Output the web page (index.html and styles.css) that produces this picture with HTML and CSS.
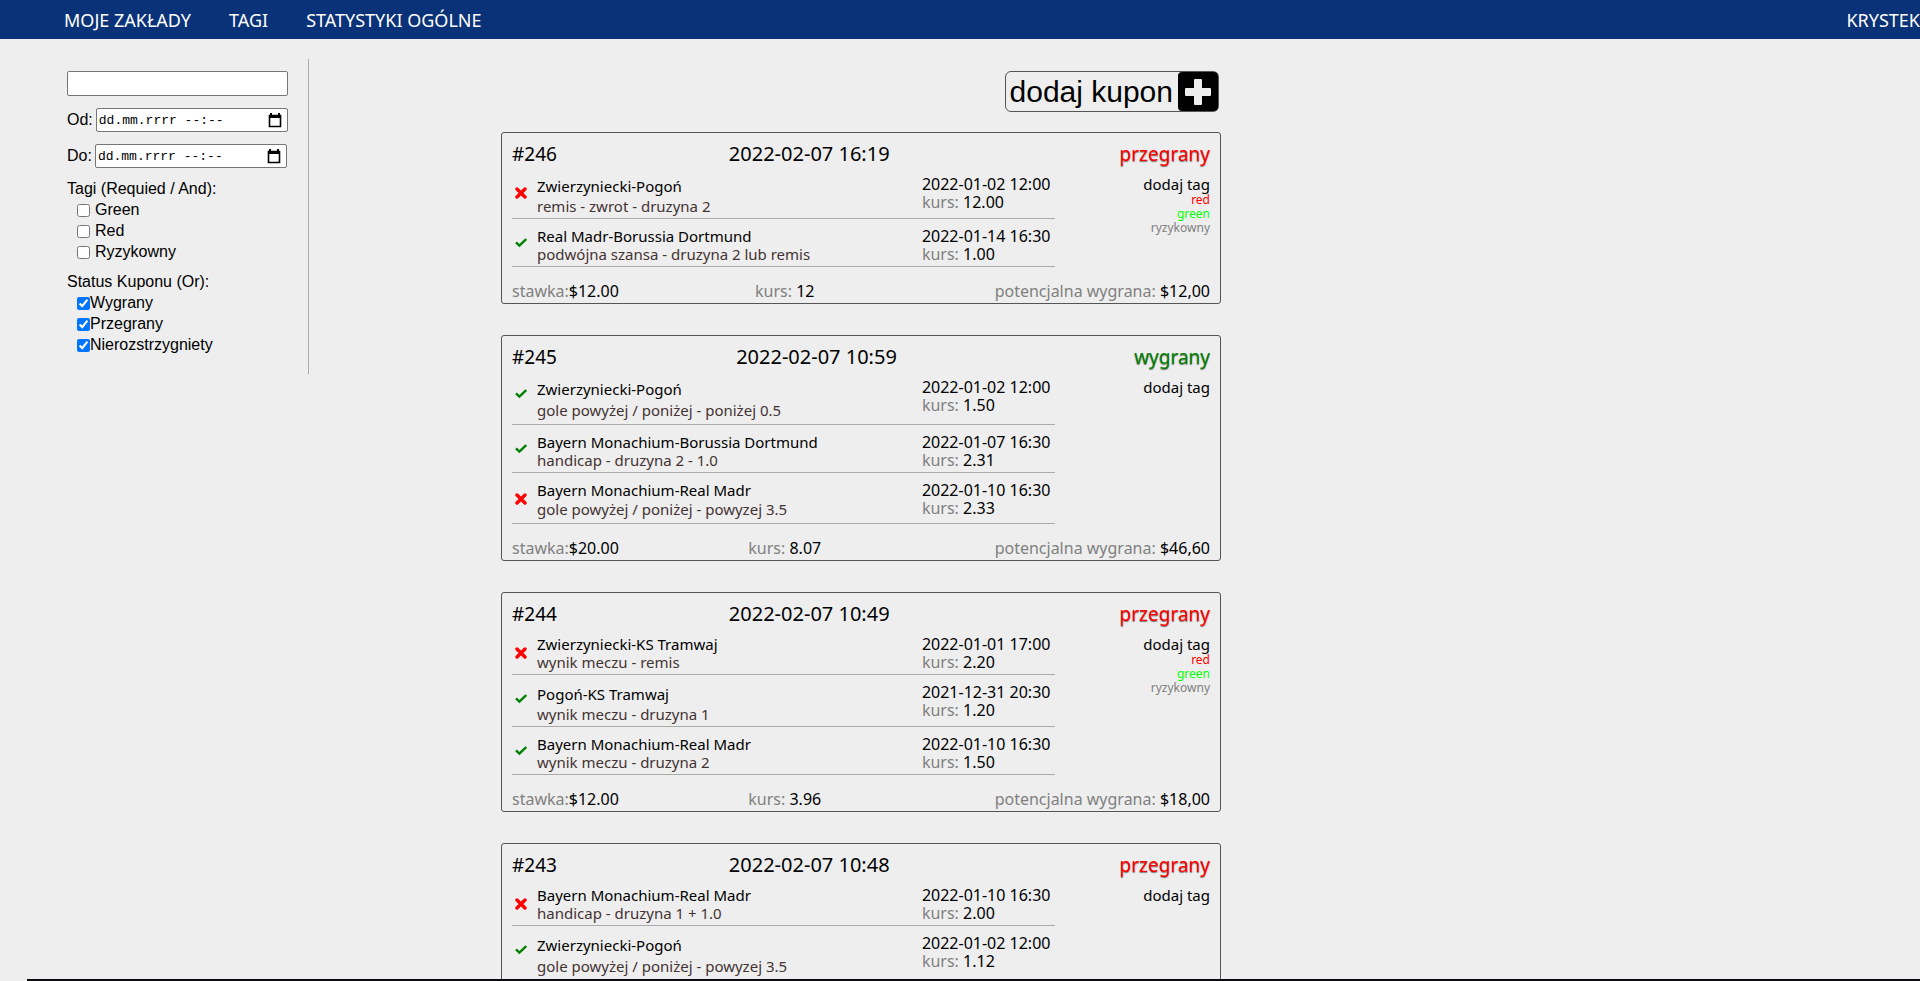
FILE: index.html
```html
<!DOCTYPE html>
<html lang="pl">
<head>
<meta charset="utf-8">
<title>Moje zakłady</title>
<link rel="stylesheet" href="styles.css">
</head>
<body>
<svg class="sprite" aria-hidden="true">
  <symbol id="check" viewBox="0 0 12 12"><path d="M1 6.4 4.4 9.6 11.2 3" fill="none" stroke="green" stroke-width="2.4"/></symbol>
  <symbol id="cross" viewBox="0 0 12 12"><path d="M2 2 10 10M10 2 2 10" fill="none" stroke="red" stroke-width="3.4" stroke-linecap="round"/></symbol>
</svg>
<nav class="nav">
  <div class="nav-links">
    <a href="#">MOJE ZAKŁADY</a>
    <a href="#">TAGI</a>
    <a href="#">STATYSTYKI OGÓLNE</a>
  </div>
  <a href="#">KRYSTEK</a>
</nav>
<div class="page">
  <form class="filters">
    <input class="search" type="text" aria-label="Szukaj">
    <div class="date-row">
      <label for="od">Od:</label>
      <div class="date-box">
        <input id="od" type="text" placeholder="dd.mm.rrrr --:--">
        <button type="button" aria-label="Wybierz datę od"><svg viewBox="0 0 14 15"><path d="M1.5 2.5h11v11h-11z" fill="none" stroke="#000" stroke-width="1.6"/><path d="M1 2h12v3H1zM2 0h2v3H2zM10 0h2v3h-2z"/></svg></button>
      </div>
    </div>
    <div class="date-row">
      <label for="do">Do:</label>
      <div class="date-box">
        <input id="do" type="text" placeholder="dd.mm.rrrr --:--">
        <button type="button" aria-label="Wybierz datę do"><svg viewBox="0 0 14 15"><path d="M1.5 2.5h11v11h-11z" fill="none" stroke="#000" stroke-width="1.6"/><path d="M1 2h12v3H1zM2 0h2v3H2zM10 0h2v3h-2z"/></svg></button>
      </div>
    </div>
    <fieldset class="group spaced">
      <legend>Tagi (Requied / And):</legend>
      <label><input type="checkbox">Green</label>
      <label><input type="checkbox">Red</label>
      <label><input type="checkbox">Ryzykowny</label>
    </fieldset>
    <fieldset class="group">
      <legend>Status Kuponu (Or):</legend>
      <label><input type="checkbox" checked>Wygrany</label>
      <label><input type="checkbox" checked>Przegrany</label>
      <label><input type="checkbox" checked>Nierozstrzygniety</label>
    </fieldset>
  </form>
  <main class="coupons">
    <button class="add" type="button">
      <span class="add-text">dodaj kupon</span>
      <span class="add-icon"><svg viewBox="0 0 26 26"><path d="M10 0h6q1 0 1 1v8h8q1 0 1 1v6q0 1-1 1h-8v8q0 1-1 1h-6q-1 0-1-1v-8H1q-1 0-1-1v-6q0-1 1-1h8V1q0-1 1-1z" fill="#eee"/></svg></span>
    </button>

    <article class="card">
      <header class="card-head"><span>#246</span><time>2022-02-07 16:19</time><strong class="lost">przegrany</strong></header>
      <div class="card-body">
        <div class="bets">
          <div class="bet">
            <svg class="mark miss"><use href="#cross"/></svg>
            <div><p class="team tall">Zwierzyniecki-Pogoń</p><p class="pick">remis - zwrot - druzyna 2</p></div>
            <div class="when"><time>2022-01-02 12:00</time><p><span class="dim">kurs:</span> 12.00</p></div>
          </div>
          <div class="bet">
            <svg class="mark"><use href="#check"/></svg>
            <div><p class="team">Real Madr-Borussia Dortmund</p><p class="pick">podwójna szansa - druzyna 2 lub remis</p></div>
            <div class="when"><time>2022-01-14 16:30</time><p><span class="dim">kurs:</span> 1.00</p></div>
          </div>
        </div>
        <div class="tags"><a href="#">dodaj tag</a><span class="tag red">red</span><span class="tag lime">green</span><span class="tag dim">ryzykowny</span></div>
      </div>
      <footer class="card-foot"><span><span class="dim">stawka:</span>$12.00</span><span class="odds"><span class="dim">kurs:</span> 12</span><span><span class="dim">potencjalna wygrana:</span> $12,00</span></footer>
    </article>

    <article class="card">
      <header class="card-head"><span>#245</span><time>2022-02-07 10:59</time><strong class="won">wygrany</strong></header>
      <div class="card-body">
        <div class="bets">
          <div class="bet">
            <svg class="mark"><use href="#check"/></svg>
            <div><p class="team tall">Zwierzyniecki-Pogoń</p><p class="pick tall">gole powyżej / poniżej - poniżej 0.5</p></div>
            <div class="when"><time>2022-01-02 12:00</time><p><span class="dim">kurs:</span> 1.50</p></div>
          </div>
          <div class="bet">
            <svg class="mark"><use href="#check"/></svg>
            <div><p class="team">Bayern Monachium-Borussia Dortmund</p><p class="pick">handicap - druzyna 2 - 1.0</p></div>
            <div class="when"><time>2022-01-07 16:30</time><p><span class="dim">kurs:</span> 2.31</p></div>
          </div>
          <div class="bet">
            <svg class="mark miss"><use href="#cross"/></svg>
            <div><p class="team">Bayern Monachium-Real Madr</p><p class="pick tall">gole powyżej / poniżej - powyzej 3.5</p></div>
            <div class="when"><time>2022-01-10 16:30</time><p><span class="dim">kurs:</span> 2.33</p></div>
          </div>
        </div>
        <div class="tags"><a href="#">dodaj tag</a></div>
      </div>
      <footer class="card-foot"><span><span class="dim">stawka:</span>$20.00</span><span class="odds"><span class="dim">kurs:</span> 8.07</span><span><span class="dim">potencjalna wygrana:</span> $46,60</span></footer>
    </article>

    <article class="card">
      <header class="card-head"><span>#244</span><time>2022-02-07 10:49</time><strong class="lost">przegrany</strong></header>
      <div class="card-body">
        <div class="bets">
          <div class="bet">
            <svg class="mark miss"><use href="#cross"/></svg>
            <div><p class="team">Zwierzyniecki-KS Tramwaj</p><p class="pick">wynik meczu - remis</p></div>
            <div class="when"><time>2022-01-01 17:00</time><p><span class="dim">kurs:</span> 2.20</p></div>
          </div>
          <div class="bet">
            <svg class="mark"><use href="#check"/></svg>
            <div><p class="team tall">Pogoń-KS Tramwaj</p><p class="pick">wynik meczu - druzyna 1</p></div>
            <div class="when"><time>2021-12-31 20:30</time><p><span class="dim">kurs:</span> 1.20</p></div>
          </div>
          <div class="bet">
            <svg class="mark"><use href="#check"/></svg>
            <div><p class="team">Bayern Monachium-Real Madr</p><p class="pick">wynik meczu - druzyna 2</p></div>
            <div class="when"><time>2022-01-10 16:30</time><p><span class="dim">kurs:</span> 1.50</p></div>
          </div>
        </div>
        <div class="tags"><a href="#">dodaj tag</a><span class="tag red">red</span><span class="tag lime">green</span><span class="tag dim">ryzykowny</span></div>
      </div>
      <footer class="card-foot"><span><span class="dim">stawka:</span>$12.00</span><span class="odds"><span class="dim">kurs:</span> 3.96</span><span><span class="dim">potencjalna wygrana:</span> $18,00</span></footer>
    </article>

    <article class="card">
      <header class="card-head"><span>#243</span><time>2022-02-07 10:48</time><strong class="lost">przegrany</strong></header>
      <div class="card-body">
        <div class="bets">
          <div class="bet">
            <svg class="mark miss"><use href="#cross"/></svg>
            <div><p class="team">Bayern Monachium-Real Madr</p><p class="pick">handicap - druzyna 1 + 1.0</p></div>
            <div class="when"><time>2022-01-10 16:30</time><p><span class="dim">kurs:</span> 2.00</p></div>
          </div>
          <div class="bet">
            <svg class="mark"><use href="#check"/></svg>
            <div><p class="team tall">Zwierzyniecki-Pogoń</p><p class="pick tall">gole powyżej / poniżej - powyzej 3.5</p></div>
            <div class="when"><time>2022-01-02 12:00</time><p><span class="dim">kurs:</span> 1.12</p></div>
          </div>
        </div>
        <div class="tags"><a href="#">dodaj tag</a></div>
      </div>
    </article>
  </main>
</div>
<div class="bottom-edge"></div>
</body>
</html>
```
FILE: styles.css
```css
* { box-sizing: border-box; }
html, body { height: 100%; }
body {
  margin: 0;
  overflow: hidden;
  background: #eee;
  color: #000;
  font: 16px/18px "Noto Sans", "Open Sans", sans-serif;
}
p { margin: 0; }
a { color: inherit; text-decoration: none; }
.sprite { display: none; }

.nav {
  display: flex;
  justify-content: space-between;
  align-items: center;
  height: 39px;
  padding-left: 64px;
  background: #0a3278;
  color: #fff;
  font-size: 18px;
}
.nav-links { display: flex; gap: 38px; }

.page { display: flex; align-items: flex-start; }

.filters {
  flex: none;
  width: 309px;
  margin-top: 20px;
  padding: 12px 20px 19px 67px;
  border-right: 1px solid #aaa;
  font-family: "Liberation Sans", Arial, sans-serif;
}
.search {
  display: block;
  width: 100%;
  height: 25px;
  border: 1px solid #767676;
  border-radius: 2px;
  background: #fff;
}
.date-row {
  display: flex;
  align-items: center;
  gap: 3px;
  margin-top: 12px;
}
.date-box {
  display: flex;
  align-items: center;
  width: 192px;
  height: 24px;
  padding: 0 5px 0 1px;
  border: 1px solid #767676;
  border-radius: 2px;
  background: #fff;
}
.date-box input {
  flex: 1;
  min-width: 0;
  padding: 0 0 0 1px;
  border: 0;
  background: none;
  font: 13px "Liberation Mono", monospace;
}
.date-box input::placeholder { color: #000; opacity: 1; }
.date-box button {
  width: 14px;
  height: 15px;
  padding: 0;
  border: 0;
  background: none;
}
.date-box svg { display: block; width: 14px; height: 15px; }
.group {
  margin: 10px 0 0;
  padding: 0;
  border: 0;
}
.group legend { padding: 0; line-height: 21px; }
.group label {
  display: flex;
  align-items: center;
  padding-left: 10px;
  line-height: 21px;
}
.group input { width: 13px; height: 13px; margin: 2px 0 0; }
.spaced label { gap: 5px; }
.spaced + .group { margin-top: 9px; }

.coupons {
  display: flex;
  flex-direction: column;
  width: 37.5%;
  margin: 32px 0 0 10%;
}
.add {
  display: flex;
  align-items: center;
  align-self: flex-end;
  height: 41px;
  margin: 0 2px 20px 0;
  padding: 0 0 0 4px;
  border: 1px solid #555;
  border-radius: 6px;
  background: none;
  color: #000;
  font: 30px "Liberation Sans", Arial, sans-serif;
}
.add-icon {
  display: grid;
  place-items: center;
  width: 40px;
  height: 39px;
  margin-left: 5px;
  border-radius: 4px;
  background: #000;
}
.add-icon svg { width: 26px; height: 26px; }

.card {
  margin-bottom: 31px;
  padding: 0 10px 3px;
  border: 1px solid #555;
  border-radius: 3px;
}
.card-head {
  display: flex;
  justify-content: space-between;
  padding: 9px 0;
  font-size: 19px;
  line-height: 24px;
}
.card-head time { margin-right: 58px; font-size: 20px; }
.card-head strong { font-weight: 400; text-shadow: 0 1px 1px rgba(0, 0, 0, .5); }
.card-body { display: grid; grid-template-columns: 7fr 2fr; }
.bets { display: grid; row-gap: 8px; }
.bet {
  display: grid;
  grid-template-columns: 25px 1fr 133px;
  padding-bottom: 3px;
  border-bottom: 1px solid #aaa;
}
.mark { width: 12px; height: 12px; margin: 9px 0 0 3px; }
.mark.miss { margin-top: 12px; }
.team, .pick { font-size: 15px; }
.pick { color: #433; }
.team.tall { line-height: 22px; }
.pick.tall { line-height: 21px; }
.when time { display: block; }
.tags {
  display: flex;
  flex-direction: column;
  align-items: flex-end;
  font-size: 15px;
}
.tag { font-size: 12px; line-height: 14px; }
.card-foot {
  display: flex;
  justify-content: space-between;
  margin-top: 15px;
}
.odds { margin-right: 44px; }
.dim { color: gray; }
.red { color: red; }
.lime { color: lime; }
.lost { color: #f00; }
.won { color: green; }

.bottom-edge {
  position: fixed;
  inset: auto 0 0 27px;
  height: 2px;
  background: #0a0a0e;
}
```
